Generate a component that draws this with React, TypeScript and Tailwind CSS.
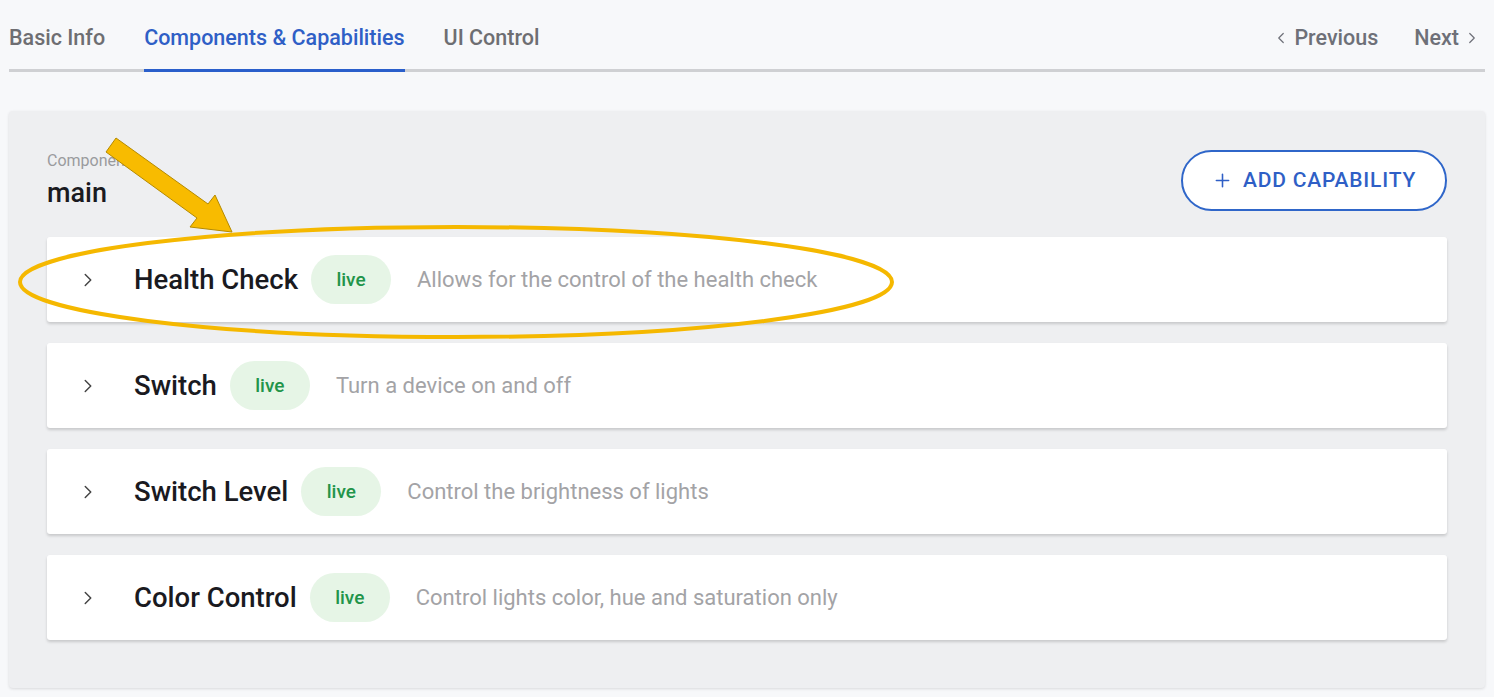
import { ChevronLeft, ChevronRight, Plus } from 'lucide-react'

const capabilities = [
  { name: 'Health Check', desc: 'Allows for the control of the health check' },
  { name: 'Switch', desc: 'Turn a device on and off' },
  { name: 'Switch Level', desc: 'Control the brightness of lights' },
  { name: 'Color Control', desc: 'Control lights color, hue and saturation only' },
]

const tabs = ['Basic Info', 'Components & Capabilities', 'UI Control']

export default function App() {
  return (
    <div
      className="relative min-h-[697px] w-full bg-[#f7f8fa] px-[9px] pb-[9px]"
      style={{ fontFamily: 'Roboto, "Liberation Sans", sans-serif' }}
    >
      {/* Tabs */}
      <div className="flex items-end justify-between border-b-[3px] border-[#cfd0d3] pr-[4px]">
        <div className="flex gap-[39px]">
          {tabs.map((tab, i) => {
            const active = i === 1
            return (
              <div
                key={tab}
                className={
                  active
                    ? '-mb-[3px] border-b-[3px] border-[#2a5fcb] pb-[15px] pt-[22px] text-[21.5px] font-medium text-[#2f5fc6]'
                    : 'pb-[15px] pt-[22px] text-[21.5px] font-medium text-[#6e6e72]'
                }
              >
                {tab}
              </div>
            )
          })}
        </div>
        <div className="flex items-center gap-[36px] pb-[15px] text-[21.5px] font-medium text-[#6e7078]">
          <div className="flex items-center gap-[4px]">
            <ChevronLeft className="h-[18px] w-[18px]" strokeWidth={1.6} />
            <span>Previous</span>
          </div>
          <div className="flex items-center gap-[4px]">
            <span>Next</span>
            <ChevronRight className="h-[18px] w-[18px]" strokeWidth={1.6} />
          </div>
        </div>
      </div>

      {/* Panel */}
      <div className="mt-[39px] rounded-[4px] bg-[#eeeff1] px-[38px] pb-[48px] pt-[40px] shadow-[0_1px_3px_rgba(0,0,0,0.12)]">
        <div className="flex items-start justify-between">
          <div>
            <p className="text-[16px] leading-[20px] text-[#9a9b9e]">Component</p>
            <p className="mt-[5px] text-[27px] font-medium leading-[34px] text-[#1a1a1f]">main</p>
          </div>
          <button className="-mt-[1px] flex h-[61px] w-[266px] items-center justify-center gap-[10px] rounded-full border-2 border-[#2f66c9] bg-white text-[21px] font-medium tracking-[0.8px] text-[#2f5fc6]">
            <Plus className="h-[21px] w-[21px]" strokeWidth={1.8} />
            ADD CAPABILITY
          </button>
        </div>

        <div className="mt-[26px] flex flex-col gap-[21px]">
          {capabilities.map((c) => (
            <div
              key={c.name}
              className="flex h-[85px] items-center rounded-[3px] bg-white pl-[30px] shadow-[0_2px_3px_rgba(0,0,0,0.16)]"
            >
              <ChevronRight className="h-[22px] w-[22px] text-[#444]" strokeWidth={1.6} />
              <span className="ml-[35px] text-[27.5px] font-medium text-[#1a1a1f]">{c.name}</span>
              <span className="ml-[13px] flex h-[49px] w-[80px] items-center justify-center rounded-full bg-[#e6f5e6] text-[19px] font-medium text-[#22944a]">
                live
              </span>
              <span className="ml-[26px] text-[22px] text-[#a3a3a6]">{c.desc}</span>
            </div>
          ))}
        </div>
      </div>

      {/* Annotation overlay */}
      <svg
        className="pointer-events-none absolute left-0 top-0"
        width="1494"
        height="697"
        viewBox="0 0 1494 697"
      >
        <ellipse cx="456" cy="282" rx="436" ry="55" fill="none" stroke="#f5b800" strokeWidth="4" />
        <polygon
          points="116,138 208,204 215,195 232,232 190,227 197,218 106,152"
          fill="#f8bb00"
          stroke="#b58a00"
          strokeWidth="1"
          strokeLinejoin="round"
        />
      </svg>
    </div>
  )
}
